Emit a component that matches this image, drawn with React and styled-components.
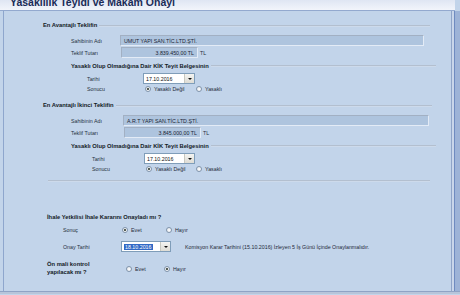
import React from 'react'
import styled, { createGlobalStyle } from 'styled-components'

const GlobalStyle = createGlobalStyle`
  html, body {
    margin: 0;
    padding: 0;
  }
  body {
    background: #c2d4ea;
    font-family: "Liberation Sans", Arial, sans-serif;
  }
`;

const Window = styled.div`
  width: 460px;
  height: 295px;
  display: flex;
  flex-direction: column;
  overflow: hidden;
  background: #c2d4ea;
`;

const TitleBar = styled.div`
  flex: none;
  height: 10px;
  margin-right: 5px;
  padding-left: 10px;
  overflow: hidden;
  background: linear-gradient(#dfe6f3, #f2f5fb);
  border-bottom: 1px solid #93a9cf;
`;

const TitleText = styled.h1`
  margin: -5px 0 0;
  font-family: "Liberation Sans", Arial, sans-serif;
  font-size: 10.5px;
  font-weight: bold;
  line-height: 14px;
  color: #1a2b57;
  white-space: nowrap;
`;

const Frame = styled.div`
  flex: 1;
  display: flex;
  min-height: 0;
  border-bottom: 1px solid #8fa3c5;
  box-shadow: 0 2px 0 #b7c5da;
  margin-bottom: 3px;
`;

const Body = styled.div`
  flex: none;
  width: 449px;
  margin-left: 3px;
  border-left: 1px solid #8ea6cd;
  border-right: 1px solid #8fa4c8;
  display: flex;
  flex-direction: column;
  padding-top: 9px;
  box-sizing: border-box;
`;

const RightEdge = styled.div`
  flex: 1;
  background: linear-gradient(90deg, #c9d6ea 0 2px, #6f8bc0 2px 3px, #9db3d7 3px);
`;

const Row = styled.div`
  flex: none;
  display: flex;
  align-items: center;
  height: ${p => p.$h}px;
  margin-top: ${p => p.$top}px;
  padding-left: ${p => p.$x - 4}px;
`;

const HeadingRow = styled(Row)`
  width: ${p => p.$end - 4}px;
  box-sizing: border-box;
`;

const Heading = styled.span`
  font-size: 5.8px;
  font-weight: bold;
  color: #141b26;
  white-space: nowrap;
`;

const Rule = styled.div`
  flex: 1;
  height: 1px;
  margin-left: 2px;
  margin-top: ${p => p.$dy || 0}px;
  background: #b3bfcf;
  box-shadow: 0 1px 0 #cddaeb;
`;

const Separator = styled.div`
  flex: none;
  height: 1px;
  width: 382px;
  margin: 7px 0 0 44px;
  background: #b3bfcf;
  box-shadow: 0 1px 0 #cddaeb;
`;

const Label = styled.span`
  flex: none;
  width: ${p => p.$w}px;
  font-size: 5.3px;
  color: #26313f;
  white-space: nowrap;
`;

const Text = styled.span`
  font-size: 5.3px;
  color: #1f2a38;
  white-space: nowrap;
  margin-left: ${p => p.$ml || 0}px;
`;

const ReadBox = styled.div`
  flex: none;
  width: ${p => p.$w}px;
  height: 11px;
  box-sizing: border-box;
  display: flex;
  align-items: center;
  justify-content: ${p => (p.$right ? 'flex-end' : 'flex-start')};
  padding: 0 3px;
  background: #aec4de;
  border: 1px solid #e3ebf6;
  border-top-color: #a2b0c3;
  border-left-color: #a2b0c3;
  font-size: 5.3px;
  color: #1b2433;
  white-space: nowrap;
`;

const Select = styled.div`
  flex: none;
  width: ${p => p.$w}px;
  height: 11px;
  box-sizing: border-box;
  display: flex;
  align-items: center;
  background: #fff;
  border: 1px solid #7f9db9;
  padding-left: 2px;
`;

const SelectValue = styled.span`
  flex: 1;
  font-size: 5.3px;
  color: #111;
  white-space: nowrap;
`;

const Highlight = styled.span`
  background: #3169c6;
  color: #fff;
  padding: 0 1px;
`;

const DropButton = styled.div`
  flex: none;
  width: 9px;
  height: 9px;
  display: flex;
  align-items: center;
  justify-content: center;
  background: linear-gradient(#f4f4f2, #dedcd4);
  border-left: 1px solid #c8c8c0;

  &::after {
    content: '';
    border-left: 2px solid transparent;
    border-right: 2px solid transparent;
    border-top: 2px solid #111;
  }
`;

const RadioGroup = styled.div`
  display: grid;
  grid-template-columns: ${p => p.$col}px auto;
  align-items: center;
`;

const Option = styled.div`
  display: flex;
  align-items: center;
  gap: 3px;
`;

const Radio = styled.span`
  flex: none;
  width: 6px;
  height: 6px;
  box-sizing: border-box;
  border-radius: 50%;
  border: 1px solid #8194ab;
  background: radial-gradient(circle at 60% 60%, #ffffff, #dfe3e8);
  display: flex;
  align-items: center;
  justify-content: center;

  &::after {
    content: '';
    display: ${p => (p.$on ? 'block' : 'none')};
    width: 2px;
    height: 2px;
    border-radius: 50%;
    background: #1e2a1e;
  }
`;

const TwoLine = styled.span`
  flex: none;
  width: ${p => p.$w}px;
  font-size: 5.8px;
  font-weight: bold;
  line-height: 7.5px;
  color: #141b26;
  align-self: flex-start;
`;

function Radios({ col, options, value }) {
  return (
    <RadioGroup $col={col}>
      {options.map(o => (
        <Option key={o}>
          <Radio $on={o === value} />
          <Text>{o}</Text>
        </Option>
      ))}
    </RadioGroup>
  );
}

function Offer({ title, titleEnd, top, owner, amount, ownerW, boxW, dateX, dateLabelW, dateW, col }) {
  return (
    <>
      <HeadingRow $x={43} $end={titleEnd} $h={9} $top={top}>
        <Heading>{title}</Heading>
        <Rule $dy={1} />
      </HeadingRow>
      <Row $x={71} $h={11} $top={top === 11 ? 3 : 6}>
        <Label $w={ownerW}>Sahibinin Adı</Label>
        <ReadBox $w={boxW}>{owner}</ReadBox>
      </Row>
      <Row $x={71} $h={11} $top={top === 11 ? 2 : 1}>
        <Label $w={ownerW + (top === 11 ? 0 : 1)}>Teklif Tutarı</Label>
        <ReadBox $w={77} $right>{amount}</ReadBox>
        <Text $ml={2}>TL</Text>
      </Row>
      <HeadingRow $x={71} $end={436} $h={9} $top={top === 11 ? 4 : 3}>
        <Heading>Yasaklı Olup Olmadığına Dair KİK Teyit Belgesinin</Heading>
        <Rule />
      </HeadingRow>
      <Row $x={dateX} $h={11} $top={3}>
        <Label $w={dateLabelW}>Tarihi</Label>
        <Select $w={dateW}>
          <SelectValue>17.10.2016</SelectValue>
          <DropButton />
        </Select>
      </Row>
      <Row $x={dateX} $h={8} $top={top === 11 ? 2 : 1}>
        <Label $w={dateLabelW + 2}>Sonucu</Label>
        <Radios col={col} options={['Yasaklı Değil', 'Yasaklı']} value="Yasaklı Değil" />
      </Row>
    </>
  );
}

export default function App() {
  return (
    <Window>
      <GlobalStyle />
      <TitleBar>
        <TitleText>Yasaklılık Teyidi ve Makam Onayı</TitleText>
      </TitleBar>
      <Frame>
        <Body>
          <Offer
            title="En Avantajlı Teklifin"
            titleEnd={430}
            top={0}
            owner="UMUT YAPI SAN.TİC.LTD.ŞTİ."
            amount="3.839.450,00 TL"
            ownerW={49}
            boxW={304}
            dateX={87}
            dateLabelW={56}
            dateW={52}
            col={51}
          />
          <Offer
            title="En Avantajlı İkinci Teklifin"
            titleEnd={432}
            top={7}
            owner="A.R.T YAPI SAN.TİC.LTD.ŞTİ."
            amount="3.845.000,00 TL"
            ownerW={52}
            boxW={306}
            dateX={92}
            dateLabelW={52}
            dateW={51}
            col={50}
          />
          <Separator />

          <Row $x={47} $h={9} $top={31}>
            <Heading>İhale Yetkilisi İhale Kararını Onayladı mı ?</Heading>
          </Row>
          <Row $x={63} $h={8} $top={5}>
            <Label $w={59}>Sonuç</Label>
            <Radios col={44} options={['Evet', 'Hayır']} value="Evet" />
          </Row>
          <Row $x={63} $h={11} $top={7}>
            <Label $w={58}>Onay Tarihi</Label>
            <Select $w={50}>
              <SelectValue><Highlight>18.10.2016</Highlight></SelectValue>
              <DropButton />
            </Select>
            <Text $ml={14}>
              Komisyon Karar Tarihini (15.10.2016) İzleyen 5 İş Günü İçinde Onaylanmalıdır.
            </Text>
          </Row>
          <Row $x={47} $h={16} $top={9}>
            <TwoLine $w={79}>Ön mali kontrol<br />yapılacak mı ?</TwoLine>
            <Radios col={38} options={['Evet', 'Hayır']} value="Hayır" />
          </Row>
        </Body>
        <RightEdge />
      </Frame>
    </Window>
  );
}
